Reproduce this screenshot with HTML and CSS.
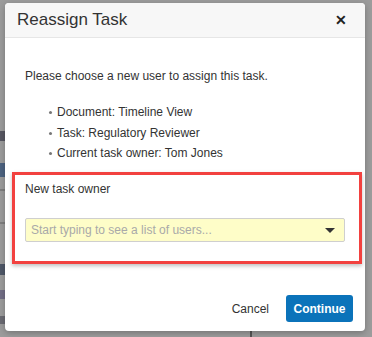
FILE: index.html
```html
<!DOCTYPE html>
<html lang="en">
<head>
    <meta charset="UTF-8">
    <meta name="viewport" content="width=device-width, initial-scale=1.0">
    <title>Reassign Task</title>
    <link rel="stylesheet" href="styles.css">
</head>
<body>
    <!-- pagina dietro al dialogo -->
    <div class="backdrop">
        <span class="bg-mark bg-s"></span>
        <span class="bg-bar"></span>
        <span class="bg-line bg-line1"></span>
        <span class="bg-line bg-line2"></span>
        <span class="bg-mark bg-b"></span>
        <span class="bg-mark bg-i"></span>
        <span class="bg-mark bg-c"></span>
        <span class="bg-vline"></span>
    </div>

    <div class="modal">
        <div class="modal-header">
            <h2>Reassign Task</h2>
            <span class="close">&#x2715;</span>
        </div>
        <div class="modal-body">
            <p class="intro">Please choose a new user to assign this task.</p>
            <ul class="details">
                <li>Document: Timeline View</li>
                <li>Task: Regulatory Reviewer</li>
                <li>Current task owner: Tom Jones</li>
            </ul>
            <div class="highlight">
                <label for="owner">New task owner</label>
                <div class="select">
                    <input type="text" id="owner" placeholder="Start typing to see a list of users...">
                    <span class="caret"></span>
                </div>
            </div>
        </div>
        <div class="modal-footer">
            <button class="btn-cancel">Cancel</button>
            <button class="btn-primary">Continue</button>
        </div>
    </div>
</body>
</html>
```

FILE: styles.css
```css
body {
    font-family: 'Liberation Sans', Arial, sans-serif;
    background-color: #9c9c9c;
    margin: 0;
    padding: 0;
    height: 337px;
    overflow: hidden;
    position: relative;
    color: #333;
}

.backdrop {
    position: absolute;
    inset: 0;
    z-index: 0;
}

/* pezzi di testo della pagina, quasi coperti dal dialogo */
.bg-mark {
    position: absolute;
    left: 0;
    width: 5px;
    background: #3a3a4a;
}

.bg-s { top: 131px; height: 10px; opacity: 0.7; }
.bg-b { top: 264px; height: 11px; background: #2f3c52; opacity: 0.7; }
.bg-i { top: 290px; height: 9px; background: #4a4270; opacity: 0.5; }
.bg-c { top: 316px; height: 8px; opacity: 0.5; }

.bg-bar {
    position: absolute;
    left: 0;
    top: 163px;
    width: 6px;
    height: 14px;
    background: #4d6380;
}

.bg-line {
    position: absolute;
    left: 0;
    width: 6px;
    height: 2px;
    background: #7f7f7f;
}

.bg-line1 { top: 189px; }
.bg-line2 { top: 222px; }

.bg-vline {
    position: absolute;
    left: 250px;
    top: 328px;
    width: 2px;
    height: 10px;
    background: #555;
}

.modal {
    position: relative;
    z-index: 1;
    margin: 3px 0 0 5px;
    width: 360px;
    height: 328px;
    background-color: #fff;
    border-radius: 4px;
    box-shadow: 0 2px 6px rgba(0, 0, 0, 0.25);
    display: flex;
    flex-direction: column;
    overflow: hidden;
}

.modal-header {
    height: 35px;
    background-color: #f7f7f7;
    border-bottom: 1px solid #e6e6e6;
    display: flex;
    align-items: center;
    justify-content: space-between;
    padding: 0 18px 0 12px;
    box-sizing: border-box;
}

.modal-header h2 {
    margin: 0;
    font-size: 17px;
    font-weight: normal;
    color: #333;
}

.close {
    font-size: 14px;
    font-weight: bold;
    color: #222;
}

.modal-body {
    padding: 30px 20px 0 20px;
    font-size: 12px;
}

.intro {
    margin: 0;
    line-height: 16px;
}

.details {
    list-style: none;
    margin: 18px 0 0 0;
    padding: 0 0 0 24px;
}

.details li {
    line-height: 20.5px;
    position: relative;
    padding-left: 8px;
}

.details li::before {
    content: "";
    position: absolute;
    left: 0;
    top: 9px;
    width: 3px;
    height: 3px;
    border-radius: 50%;
    background: #777;
}

.highlight {
    margin: 8px -17px 0 -13px;
    padding: 6px 14px 19px 10px;
    border: 3px solid #f2413f;
    box-shadow: 0 2px 4px rgba(0, 0, 0, 0.25);
}

.highlight label {
    display: block;
    line-height: 16px;
    color: #333;
}

.select {
    position: relative;
    margin-top: 21px;
}

.select input {
    display: block;
    width: 100%;
    box-sizing: border-box;
    height: 24px;
    padding: 0 20px 0 5px;
    border: 1px solid #cfcfcf;
    border-radius: 2px;
    background-color: #fefdc8;
    font-family: inherit;
    font-size: 12px;
    color: #333;
}

.select input::placeholder {
    color: #a9a9a9;
}

.caret {
    position: absolute;
    right: 10px;
    top: 10px;
    border-left: 5px solid transparent;
    border-right: 5px solid transparent;
    border-top: 5px solid #333;
}

.modal-footer {
    margin-top: auto;
    display: flex;
    justify-content: flex-end;
    align-items: center;
    gap: 17px;
    padding: 0 12px 9px 0;
}

.btn-cancel {
    border: none;
    background: none;
    padding: 0;
    font-family: inherit;
    font-size: 12px;
    color: #333;
}

.btn-primary {
    width: 67px;
    height: 27px;
    border: none;
    border-radius: 3px;
    background-color: #0b73ba;
    color: #fff;
    font-family: inherit;
    font-size: 12px;
    font-weight: bold;
}
```
